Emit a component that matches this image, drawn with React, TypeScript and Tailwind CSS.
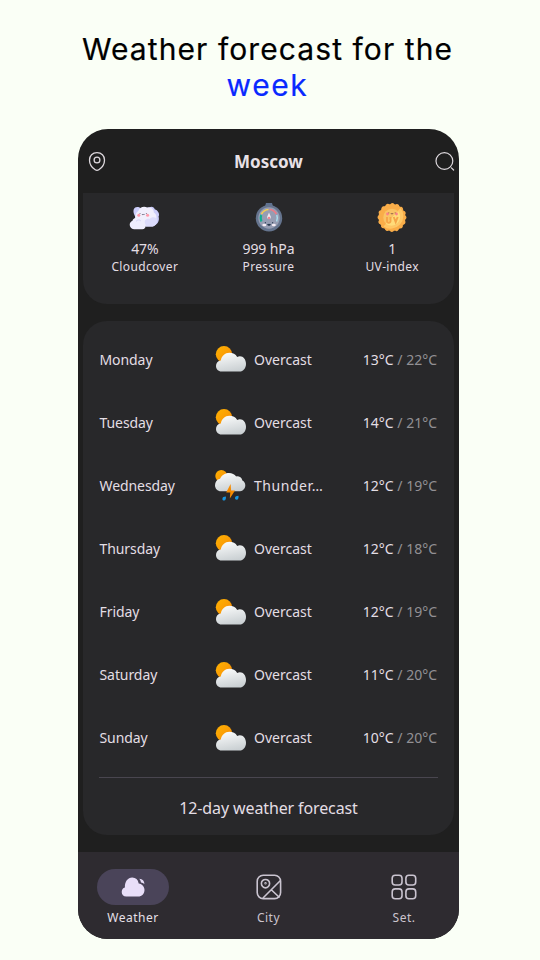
import type { ReactNode } from "react";

const days = [
  ["Monday", "Overcast", "13", "22"],
  ["Tuesday", "Overcast", "14", "21"],
  ["Wednesday", "Thunder…", "12", "19"],
  ["Thursday", "Overcast", "12", "18"],
  ["Friday", "Overcast", "12", "19"],
  ["Saturday", "Overcast", "11", "20"],
  ["Sunday", "Overcast", "10", "20"],
];

function Gradients() {
  return (
    <svg className="absolute h-0 w-0" aria-hidden="true">
      <defs>
        <linearGradient id="sun" x1="0" y1="0" x2="1" y2="1">
          <stop offset="0" stopColor="#ffb300" />
          <stop offset="0.5" stopColor="#fb9f05" />
          <stop offset="1" stopColor="#ee7800" />
        </linearGradient>
        <linearGradient id="cloud" x1="0.3" y1="0" x2="0.6" y2="1">
          <stop offset="0" stopColor="#fafbfb" />
          <stop offset="1" stopColor="#c9cfd2" />
        </linearGradient>
      </defs>
    </svg>
  );
}

function OvercastIcon() {
  return (
    <svg className="h-8 w-8" viewBox="0 0 32 32">
      <circle cx="9" cy="11.2" r="8.2" fill="url(#sun)" />
      <path
        d="M6.500 28.600C3.300 28.600 1 26.100 1 23.100c0-3 1.900-5.200 4.800-5.600C6.700 12.900 10.100 9.800 14.300 9.800c3.500 0 6.400 1.500 7.900 4.100.9-.4 1.800-.6 2.700-.6 3.500 0 6.100 3.500 6.100 7.500 0 4.500-2.700 7.800-6.500 7.800z"
        fill="url(#cloud)"
      />
    </svg>
  );
}

function ThunderIcon() {
  return (
    <svg className="h-8 w-8" viewBox="0 0 32 32">
      <circle cx="6.300" cy="7" r="6" fill="url(#sun)" />
      <path
        d="M6 22.300C2.500 22.300 0 19.500 0 16.200c0-3.200 2-5.700 5-6.400C6.400 6.300 9.800 3.900 14 3.900c3 0 5.600 1.200 7.200 3.500 3-.4 5.400 1.200 6.200 4 1.800.9 2.900 2.600 2.900 4.800 0 3.300-2.200 5.600-5.200 6.100z"
        fill="url(#cloud)"
      />
      <path d="M15.600 14.900 11.200 23.500h4.100l-.5 6L20 21.400h-3.900z" fill="#f58b00" />
      <path
        d="M7.400 29.900c0-1.700 1.400-2.200 3.500-2.300.3 2.300-.3 4-1.800 4-1 0-1.700-.7-1.700-1.700zM20 29.100c0-1.700 1.500-2.200 3.500-2.300.3 2.300-.3 4-1.800 4-1 0-1.700-.7-1.700-1.700z"
        fill="#1695df"
      />
    </svg>
  );
}

function CloudcoverIcon() {
  return (
    <svg className="h-8 w-8" viewBox="0 0 32 32">
      <path d="M5 13c-1.300-4 0-7 3.200-7 1.500 0 2.600.4 3.300 1.400l9-1.200c2.200-1.300 4.800-.2 5.200 2 3 .8 5.500 4.500 3.900 7.400 1.200 4.500-1.100 8.200-5.200 9.100H10z" fill="#cccdfa" />
      <path d="M7.500 21C5.300 17.400 6 12 9.300 10c1.300-3.900 6-5.300 9-3.200 3.700-1 6.700 1.400 6.500 4.700 4 2.300 3.400 8.200-.3 10.100-2.300 1.800-5 2.200-7.500 1z" fill="#f1effd" />
      <path d="M15 23c0-3.800 3-6.100 5.700-4.900 1.800-2.700 6.500-2.400 7.500.6-.2 4.600-2.500 7-5.700 7h-6z" fill="#dcdcfc" />
      <path d="M5 28.300c-5.500-.7-5.300-7.200-1.700-8.300 1-3.500 5.600-4.700 8-2 2.800-.5 4.700 1.500 4.500 4 1.800 2.700.5 6.300-2.500 6.300z" fill="#efeefe" />
      <path d="M7 20.400c1.300-1.800 3.500-2 4.800-.5" stroke="#c9c8f2" fill="none" strokeWidth=".7" />
      <circle cx="9.800" cy="14.300" r="1.500" fill="#ff9aab" />
      <circle cx="18.600" cy="14.300" r="1.500" fill="#ff9aab" />
      <path d="M11 12v.9M17.400 12v.9M12.800 13c.5.8 1 .8 1.400 0 .5.8 1 .8 1.400 0" stroke="#484059" strokeWidth=".7" fill="none" />
    </svg>
  );
}

function PressureIcon() {
  return (
    <svg className="h-8 w-8" viewBox="0 0 32 32">
      <path d="M12 5.500 13 2h6l1 3.500z" fill="#5f718f" />
      <circle cx="16" cy="17.200" r="13.200" fill="#65748e" />
      <circle cx="16" cy="17" r="10.700" fill="#969db3" />
      <path d="M8.400 20.500a8.500 8.500 0 0 1-.2-6.500" fill="none" stroke="#13ae91" strokeWidth="2.200" />
      <path d="M8.500 13A8.500 8.500 0 0 1 15.500 8.500" fill="none" stroke="#f4cf53" strokeWidth="1.700" />
      <path d="M16.500 8.500a8.500 8.500 0 0 1 6.900 4.500" fill="none" stroke="#ef7b86" strokeWidth="1.700" />
      <path d="M23.800 14a8.500 8.500 0 0 1-.2 6.500" fill="none" stroke="#a8dcee" strokeWidth="1.500" />
      <path d="m16 11.500-1.800 4.200c-.5 3.200 4.100 3.200 3.600 0z" fill="#f1e8ef" />
      <circle cx="16" cy="17" r="1.200" fill="#eb8394" />
      <ellipse cx="11.300" cy="24" rx="2" ry="1.200" fill="#f4ecf4" />
      <ellipse cx="20.800" cy="24" rx="2" ry="1.200" fill="#f4ecf4" />
      <path d="M12.400 21.300v1M19.600 21.300v1M14.700 23c.5 1.500 2.100 1.500 2.600 0" stroke="#25364e" strokeWidth="1.200" fill="#25364e" />
    </svg>
  );
}

function UvIcon() {
  return (
    <svg className="h-8 w-8" viewBox="0 0 32 32">
      <circle cx="16" cy="16.500" r="13.500" fill="#f9ad49" />
      <circle cx="16" cy="16.500" r="12.500" fill="none" stroke="#f9ad49" strokeWidth="4" strokeDasharray="0.010 4.899" strokeLinecap="round" />
      <path d="M24.500 7a12.700 12.700 0 0 1-17 18.500z" fill="#ffc765" />
      <circle cx="16" cy="16.500" r="8.700" fill="#fac466" />
      <path d="M22.200 10.300a8.800 8.800 0 0 1-12.400 12.400z" fill="#ffdb79" />
      <path d="M11 16v3.800c0 2.500 3.500 2.500 3.500 0V16M17.700 16l2 5.200 2-5.200" fill="none" stroke="#f5a548" strokeWidth="1.900" />
      <circle cx="11.500" cy="13" r="1.400" fill="#fb8088" />
      <circle cx="20.500" cy="13" r="1.400" fill="#fb8088" />
      <path d="M12.800 11.400v.9M19.200 11.400v.9M14.800 12.200c.4.900.9.900 1.200 0 .4.900.9.900 1.200 0" stroke="#6d4242" strokeWidth=".7" fill="none" />
    </svg>
  );
}

function Stat({ icon, value, label }: { icon: ReactNode; value: string; label: string }) {
  return (
    <div className="flex w-[124px] flex-col items-center">
      {icon}
      <div className="mt-[7px] h-[18px] text-[14px] leading-[18px] tracking-[-0.1px]">{value}</div>
      <div className="text-[12px] leading-[17px] tracking-[0.350px]">{label}</div>
    </div>
  );
}

export default function App() {
  return (
    <main className="h-[960px] w-[540px] overflow-hidden bg-[#fafff6] pt-[31px] font-['Noto_Sans','Open_Sans',sans-serif]">
      <Gradients />
      <h1 className="h-[98px] pr-[5px] text-center font-['Inter',sans-serif] text-[30px] leading-[36px] font-normal tracking-[1.080px] whitespace-nowrap text-black [-webkit-text-stroke:0.200px_currentColor]">
        Weather forecast for the
        <br />
        <span className="tracking-[1.600px] text-[#0929ff]">week</span>
      </h1>

      <div className="ml-[78px] flex h-[809.500px] w-[381px] flex-col overflow-hidden rounded-[30px] bg-[#1f1f1f] text-[#e3dee4]">
        <header className="flex h-16 shrink-0 items-center justify-between pt-px pr-1 pl-[10px]">
          <svg className="h-[20px] w-[18px]" viewBox="0 0 18 20" fill="none" stroke="#ddd8dd" strokeWidth="1.300">
            <path d="M9 .7C4.500.7 1.500 3.700 1.500 7.900c0 4.500 3.300 8.300 5.700 9.900 1.200.8 2.400.8 3.600 0 2.400-1.600 5.700-5.400 5.700-9.900C16.500 3.700 13.500.7 9 .7Z" />
            <circle cx="9" cy="8" r="2.900" />
          </svg>
          <span className="pr-[4px] text-[17px] font-bold text-[#e8e1e7]">Moscow</span>
          <svg className="h-5 w-5" viewBox="0 0 20 20" fill="none" stroke="#ddd8dd" strokeWidth="1.200" strokeLinecap="round">
            <circle cx="9.400" cy="9" r="8.400" />
            <path d="m16.400 15.800 2.200 2.200" />
          </svg>
        </header>

        <section className="mx-[5px] flex h-[111px] shrink-0 rounded-b-[24px] bg-[#28282a] pt-2">
          <Stat icon={<CloudcoverIcon />} value="47%" label="Cloudcover" />
          <Stat icon={<PressureIcon />} value="999 hPa" label="Pressure" />
          <Stat icon={<UvIcon />} value="1" label="UV-index" />
        </section>

        <section className="mx-[5px] mt-[17px] flex h-[513.500px] w-[371px] shrink-0 flex-col rounded-[24px] bg-[#28282a] px-4 pt-[6.450px]">
          {days.map(([day, condition, low, high]) => (
            <div key={day} className="flex h-[63.150px] shrink-0 items-center pl-[0.500px] text-[14px]">
              <span className="w-[115.500px] tracking-[-0.080px]">{day}</span>
              {condition === "Overcast" ? <OvercastIcon /> : <ThunderIcon />}
              {condition === "Overcast" ? (
                <span className="ml-[7px]">{condition}</span>
              ) : (
                <span className="ml-[7px] tracking-[0.550px]">{condition}</span>
              )}
              <span className="mr-px ml-auto whitespace-nowrap">
                {low}°C<span className="text-[#929094]"> / {high}°C</span>
              </span>
            </div>
          ))}
          <div className="mt-[7.500px] h-px shrink-0 bg-[#49464f]" />
          <div className="flex h-[60px] shrink-0 items-center justify-center text-[16px] tracking-[-0.120px]">12-day weather forecast</div>
        </section>

        <nav className="mt-auto flex h-[87px] shrink-0 justify-between bg-[#2e2b30] px-[19px] pt-[17px] text-[12px] leading-[16px] tracking-[0.500px] text-[#ccc4ce]">
          <div className="flex w-[72px] flex-col items-center gap-[5px]">
            <div className="flex h-9 w-[72px] items-center justify-center rounded-full bg-[#4a4459]">
              <svg className="h-6 w-6" viewBox="0 0 24 24" fill="#e8def8">
                <path d="M5.300 21.500C2.400 21.500.7 19.500.7 16.900c0-2.200 1.300-4 3.200-4.500C3.600 6.700 6.800 2.500 11.200 2.500c3.600 0 5.800 2.100 6.500 5.900 3.500.5 5.800 3.200 5.800 6.600 0 3.800-2.700 6.500-6.300 6.500z" />
                <path d="M18.300 3.700c3.200.3 5.100 2.200 5.100 5.400-1-.8-2.200-1.400-3.400-1.600-.2-1.500-.8-2.800-1.700-3.800z" />
              </svg>
            </div>
            <span className="text-[#e6e0e9]">Weather</span>
          </div>
          <div className="flex w-[72px] flex-col items-center gap-[5px]">
            <div className="flex h-9 items-center">
              <svg className="h-[26px] w-[26px]" viewBox="0 0 26 26" fill="none" stroke="#cac4d0" strokeWidth="1.600">
                <rect x="1.200" y="1.200" width="23.400" height="23.400" rx="6" />
                <path d="M7 24 24.200 6.800M15 15.500l8.500 8" />
                <path d="M9.500 5.500c-2.400 0-4.100 1.600-4.100 3.900 0 2.300 1.900 4.500 4.100 4.500s4.100-2.200 4.100-4.500c0-2.300-1.700-3.900-4.100-3.900Z" />
                <circle cx="9.500" cy="9.300" r=".4" />
              </svg>
            </div>
            <span>City</span>
          </div>
          <div className="flex w-[72px] flex-col items-center gap-[5px]">
            <div className="flex h-9 items-center">
              <svg className="h-[26px] w-[26px]" viewBox="0 0 26 26" fill="none" stroke="#cac4d0" strokeWidth="1.600">
                <rect x="1.200" y="1.200" width="9.800" height="9.800" rx="3" />
                <rect x="14.900" y="1.200" width="9.800" height="9.800" rx="3" />
                <rect x="1.200" y="14.900" width="9.800" height="9.800" rx="3" />
                <rect x="14.900" y="14.900" width="9.800" height="9.800" rx="3" />
              </svg>
            </div>
            <span>Set.</span>
          </div>
        </nav>
      </div>
    </main>
  );
}
